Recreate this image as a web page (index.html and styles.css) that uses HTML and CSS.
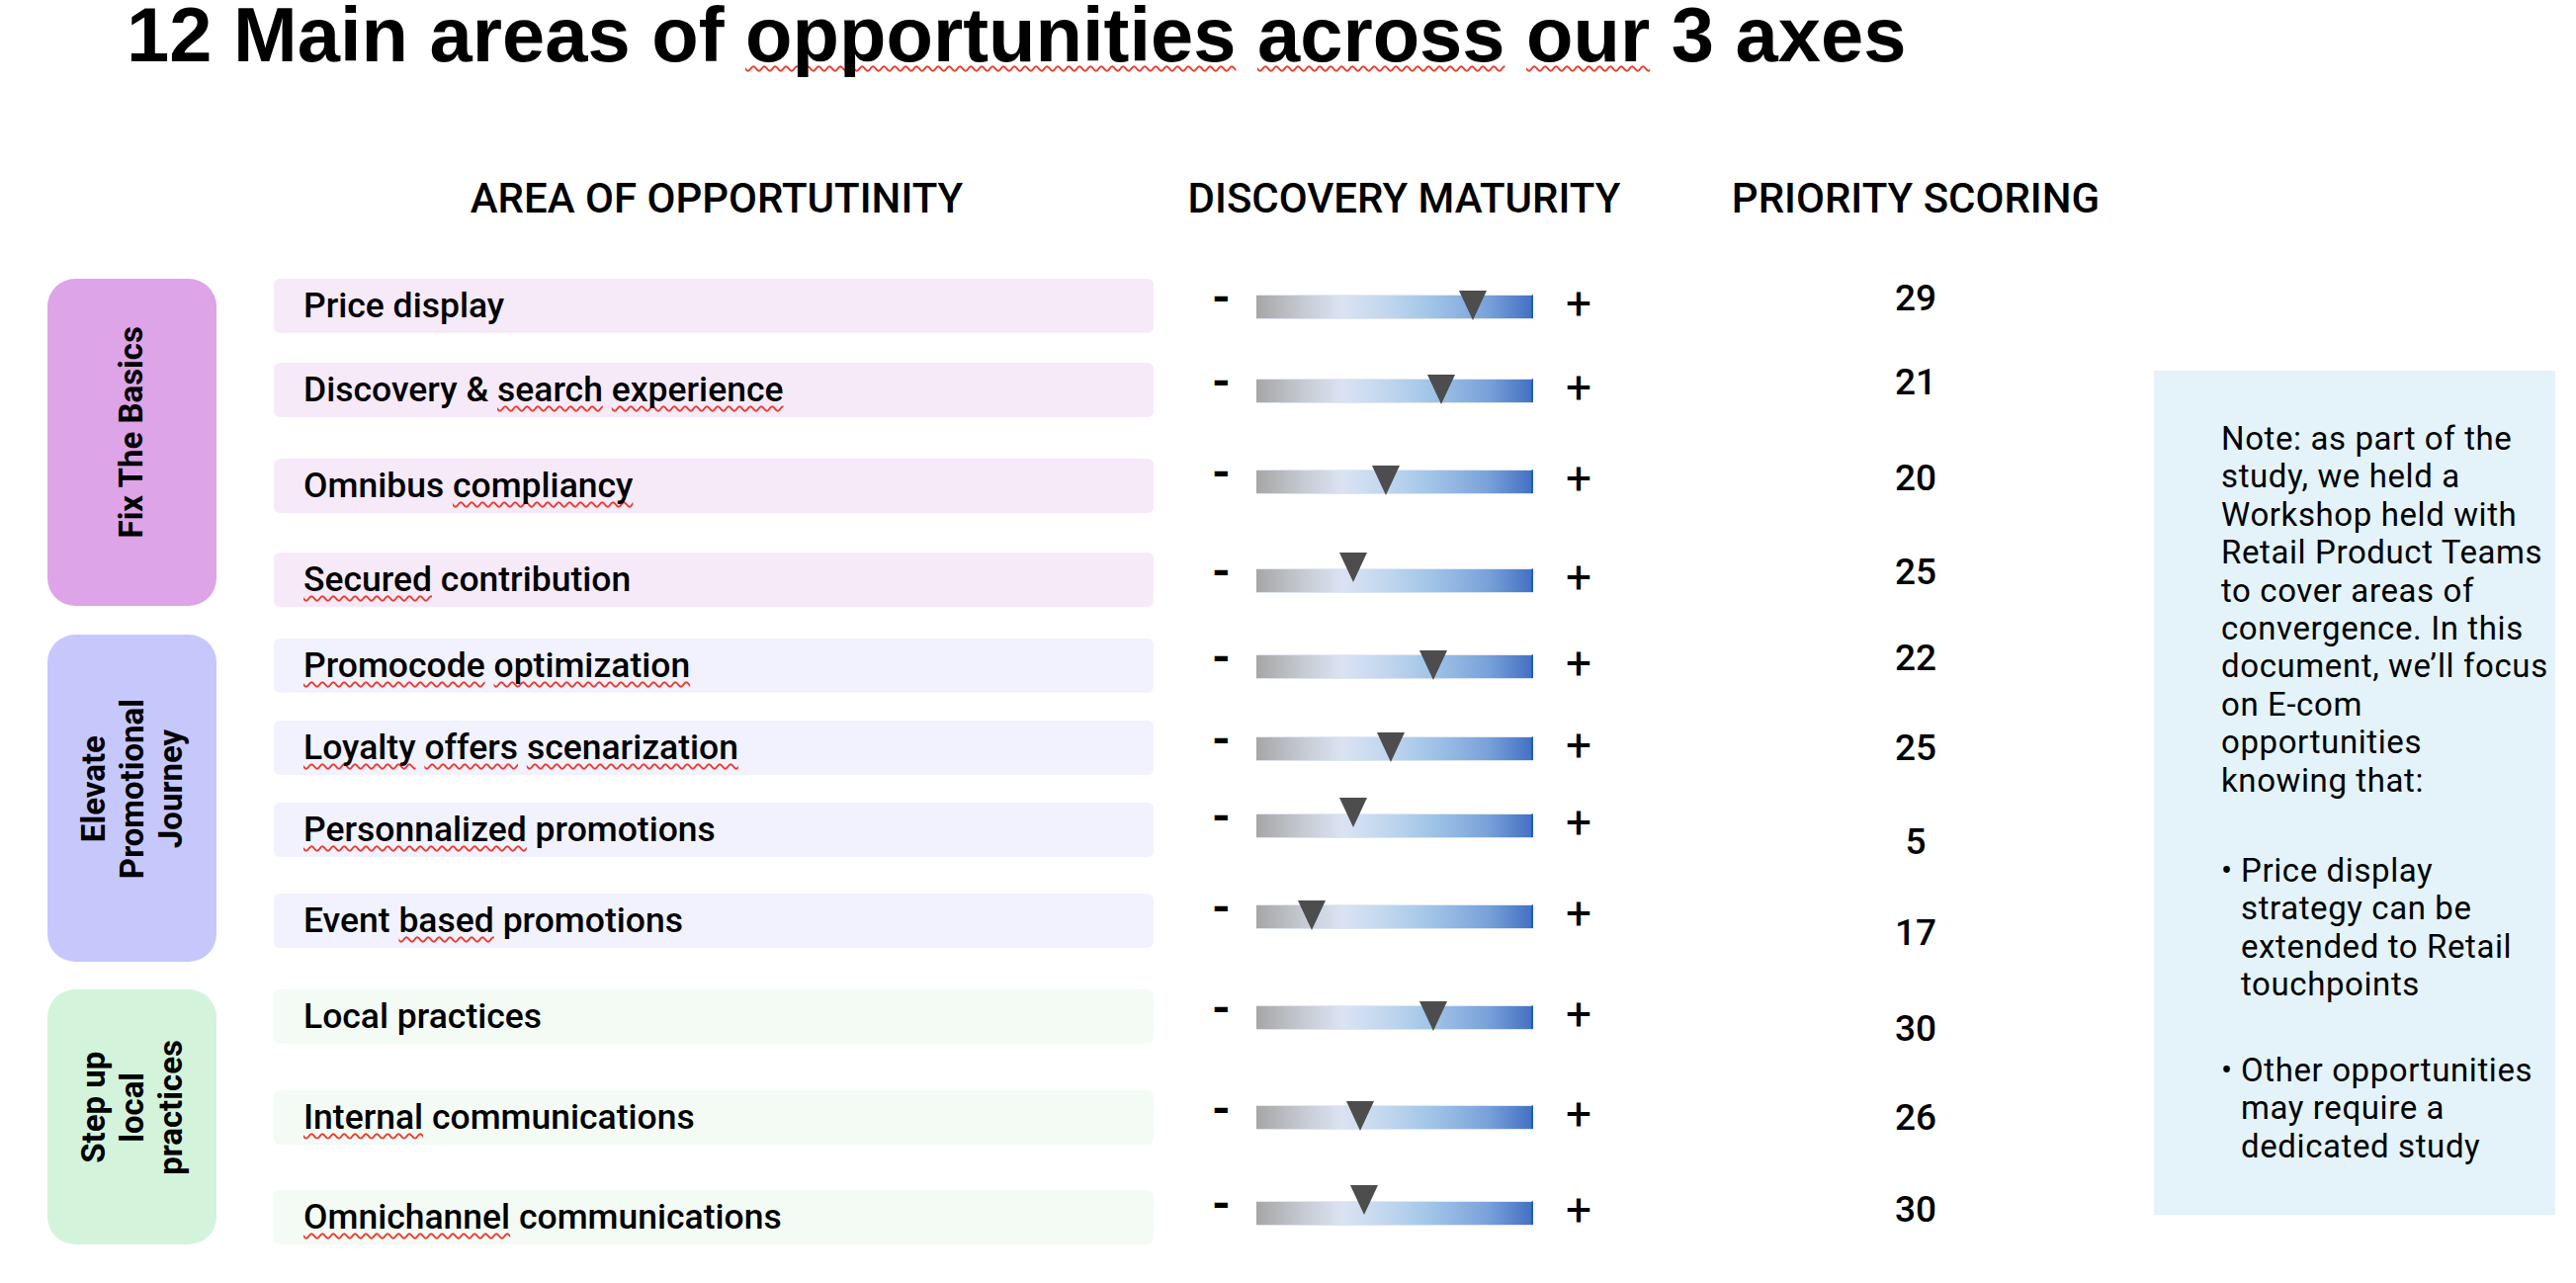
FILE: index.html
```html
<!DOCTYPE html>
<html lang="en">
<head>
<meta charset="utf-8">
<title>12 Main areas of opportunities across our 3 axes</title>
<link rel="stylesheet" href="styles.css">
</head>
<body>
<main class="slide">
  <h1 class="title">12 Main areas of <span class="sp">opportunities</span> <span class="sp">across</span> <span class="sp">our</span> 3 axes</h1>

  <div class="heads">
    <div class="head head-area">AREA OF OPPORTUTINITY</div>
    <div class="head head-maturity">DISCOVERY MATURITY</div>
    <div class="head head-score">PRIORITY SCORING</div>
  </div>

  <div class="board">
    <div class="groups">
      <section class="group basics">
        <div class="pill"><span class="pill-text">Fix The Basics</span></div>
        <div class="rows">
          <div class="row">
            <div class="label">Price display</div>
            <div class="slider"><span class="sign minus">-</span><span class="bar"><i class="marker" style="left:78.8%"></i></span><span class="sign plus">+</span></div>
            <div class="score hi">29</div>
          </div>
          <div class="row">
            <div class="label">Discovery &amp; <span class="sp">search</span> <span class="sp">experience</span></div>
            <div class="slider"><span class="sign minus">-</span><span class="bar"><i class="marker" style="left:67.1%"></i></span><span class="sign plus">+</span></div>
            <div class="score hi">21</div>
          </div>
          <div class="row">
            <div class="label">Omnibus <span class="sp">compliancy</span></div>
            <div class="slider hi"><span class="sign minus">-</span><span class="bar"><i class="marker" style="left:47%"></i></span><span class="sign plus">+</span></div>
            <div class="score hi">20</div>
          </div>
          <div class="row">
            <div class="label"><span class="sp">Secured</span> contribution</div>
            <div class="slider"><span class="sign minus">-</span><span class="bar"><i class="marker raised" style="left:35.2%"></i></span><span class="sign plus">+</span></div>
            <div class="score hi">25</div>
          </div>
        </div>
      </section>

      <section class="group promo">
        <div class="pill"><span class="pill-text">Elevate<br>Promotional<br>Journey</span></div>
        <div class="rows">
          <div class="row">
            <div class="label"><span class="sp">Promocode</span> <span class="sp">optimization</span></div>
            <div class="slider"><span class="sign minus">-</span><span class="bar"><i class="marker" style="left:64.5%"></i></span><span class="sign plus">+</span></div>
            <div class="score hi">22</div>
          </div>
          <div class="row">
            <div class="label"><span class="sp">Loyalty</span> <span class="sp">offers</span> <span class="sp">scenarization</span></div>
            <div class="slider"><span class="sign minus">-</span><span class="bar"><i class="marker" style="left:48.9%"></i></span><span class="sign plus">+</span></div>
            <div class="score">25</div>
          </div>
          <div class="row">
            <div class="label"><span class="sp">Personnalized</span> promotions</div>
            <div class="slider hi"><span class="sign minus">-</span><span class="bar"><i class="marker raised" style="left:35.2%"></i></span><span class="sign plus">+</span></div>
            <div class="score lo">5</div>
          </div>
          <div class="row">
            <div class="label">Event <span class="sp">based</span> promotions</div>
            <div class="slider hi"><span class="sign minus">-</span><span class="bar"><i class="marker" style="left:20%"></i></span><span class="sign plus">+</span></div>
            <div class="score lo">17</div>
          </div>
        </div>
      </section>

      <section class="group local">
        <div class="pill"><span class="pill-text">Step up<br>local<br>practices</span></div>
        <div class="rows">
          <div class="row">
            <div class="label">Local practices</div>
            <div class="slider"><span class="sign minus">-</span><span class="bar"><i class="marker" style="left:64.5%"></i></span><span class="sign plus">+</span></div>
            <div class="score lo">30</div>
          </div>
          <div class="row">
            <div class="label"><span class="sp">Internal</span> communications</div>
            <div class="slider"><span class="sign minus">-</span><span class="bar"><i class="marker" style="left:37.7%"></i></span><span class="sign plus">+</span></div>
            <div class="score">26</div>
          </div>
          <div class="row">
            <div class="label"><span class="sp">Omnichannel</span> communications</div>
            <div class="slider hi"><span class="sign minus">-</span><span class="bar"><i class="marker raised" style="left:39.3%"></i></span><span class="sign plus">+</span></div>
            <div class="score hi">30</div>
          </div>
        </div>
      </section>
    </div>

    <aside class="note">
      <p class="note-lead">Note: as part of the<br>study, we held a<br>Workshop held with<br>Retail Product Teams<br>to cover areas of<br>convergence. In this<br>document, we’ll focus<br>on E-com<br>opportunities<br>knowing that:</p>
      <ul class="note-list">
        <li>Price display<br>strategy can be<br>extended to Retail<br>touchpoints</li>
        <li>Other opportunities<br>may require a<br>dedicated study</li>
      </ul>
    </aside>
  </div>
</main>
</body>
</html>
```

FILE: styles.css
```css
* { box-sizing: border-box; }

html, body {
  margin: 0;
  padding: 0;
  background: #ffffff;
}

body {
  width: 2606px;
  height: 1298px;
  overflow: hidden;
  font-family: Roboto, "Liberation Sans", sans-serif;
  color: #000;
}

.title {
  margin: 0 0 0 128px;
  font-family: "Liberation Sans", Arial, sans-serif;
  font-weight: 700;
  font-size: 77.7px;
  line-height: 70px;
  white-space: nowrap;
}

.sp {
  text-decoration-line: underline;
  text-decoration-style: wavy;
  text-decoration-color: #ec3b2f;
  text-decoration-thickness: 1.5px;
  text-underline-offset: 4px;
  text-decoration-skip-ink: none;
}

/* column headers */
.heads {
  display: grid;
  grid-template-columns: 890px 533px 476px;
  margin: 110px 0 0 277px;
  font-weight: 500;
  font-size: 42px;
  line-height: 42px;
  white-space: nowrap;
}

.head { text-align: center; }
.head-area { padding-left: 6px; }
.head-maturity { padding-right: 26px; }

/* board */
.board {
  display: flex;
  align-items: flex-start;
  margin-top: 60px;
  padding-left: 48px;
}

.groups {
  display: flex;
  flex-direction: column;
  gap: 28px;
}

.group { display: flex; }

.pill {
  flex: none;
  width: 171px;
  height: 331px;
  margin-right: 58px;
  border-radius: 28px;
  display: flex;
  align-items: center;
  justify-content: center;
}

.local .pill { height: 258px; }

.basics .pill { background: #dda4e8; }
.promo .pill { background: #c6c8fc; }
.local .pill { background: #d4f3db; }

.pill-text {
  writing-mode: vertical-rl;
  transform: rotate(180deg);
  text-align: center;
  font-weight: 700;
  font-size: 33px;
  line-height: 39px;
  white-space: nowrap;
}

.basics .pill-text { margin-left: -2px; margin-bottom: 20px; }
.promo .pill-text { margin-bottom: 18px; }
.local .pill-text { margin-bottom: 20px; }

.rows {
  width: 1899px;
  display: flex;
  flex-direction: column;
  justify-content: space-between;
}

/* uneven row spacing, as in the slide */
.basics .rows { justify-content: flex-start; }
.basics .row:nth-child(2) { margin-top: 30px; }
.basics .row:nth-child(3) { margin-top: 42px; }
.basics .row:nth-child(4) { margin-top: 40px; }

.promo .rows { justify-content: flex-start; padding-top: 4px; }
.promo .row:nth-child(2) { margin-top: 28px; }
.promo .row:nth-child(3) { margin-top: 28px; }
.promo .row:nth-child(4) { margin-top: 37px; }

.row {
  display: grid;
  grid-template-columns: 890px 533px 476px;
  grid-template-rows: 55px;
  align-items: center;
  height: 55px;
  flex: none;
}

.label {
  height: 55px;
  border-radius: 6px;
  padding-left: 30px;
  font-weight: 500;
  font-size: 35.5px;
  line-height: 55px;
  white-space: nowrap;
}

.basics .label { background: #f6eaf8; }
.promo .label { background: #f1f2fe; }
.local .label { background: #f3fbf4; }

/* maturity slider */
.slider {
  display: flex;
  align-items: center;
  padding-left: 59px;
}

.slider.hi { margin-bottom: 10px; }

.sign {
  display: inline-block;
  text-align: center;
  line-height: 30px;
  height: 30px;
}

.minus {
  width: 14px;
  margin-right: 31px;
  margin-bottom: 17px;
  font-weight: 700;
  font-size: 48px;
}

.plus {
  width: 26px;
  margin-left: 33px;
  margin-bottom: 6px;
  font-weight: 400;
  font-size: 46px;
}

.bar {
  position: relative;
  flex: none;
  width: 280px;
  height: 24px;
  background: linear-gradient(90deg, #a6a6a6 0%, #c6cad2 17%, #dbe3f3 31%, #c0d6ee 48%, #a0c4e7 64%, #7aa2da 84%, #4472c4 100%);
  border-top: 1px solid #e2e9f5;
  border-right: 2px solid #1c5fcb;
  box-shadow: 0 1px 0 #dfe6f2;
}

.marker {
  position: absolute;
  top: -5px;
  width: 0;
  height: 0;
  border-left: 14px solid transparent;
  border-right: 14px solid transparent;
  border-top: 30px solid #4d4d4d;
  transform: translateX(-50%);
}

.marker.raised { top: -17px; }

/* score */
.score {
  text-align: center;
  font-weight: 500;
  font-size: 37px;
  line-height: 37px;
}

.score.hi { margin-bottom: 16px; }
.score.lo { margin-top: 24px; }

/* note */
.note {
  flex: none;
  width: 406px;
  height: 854px;
  margin: 93px 0 0 3px;
  padding: 50px 0 0 68px;
  background: #e3f3f9;
  font-size: 33px;
  line-height: 38.4px;
  letter-spacing: 0.6px;
  white-space: nowrap;
}

.note-lead { margin: 0; }

.note-list {
  list-style: none;
  margin: 53px 0 0;
  padding: 0;
}

.note-list li {
  padding-left: 20px;
}

.note-list li::before {
  content: "•";
  display: inline-block;
  width: 20px;
  margin-left: -20px;
}

.note-list li + li { margin-top: 48px; }
```
